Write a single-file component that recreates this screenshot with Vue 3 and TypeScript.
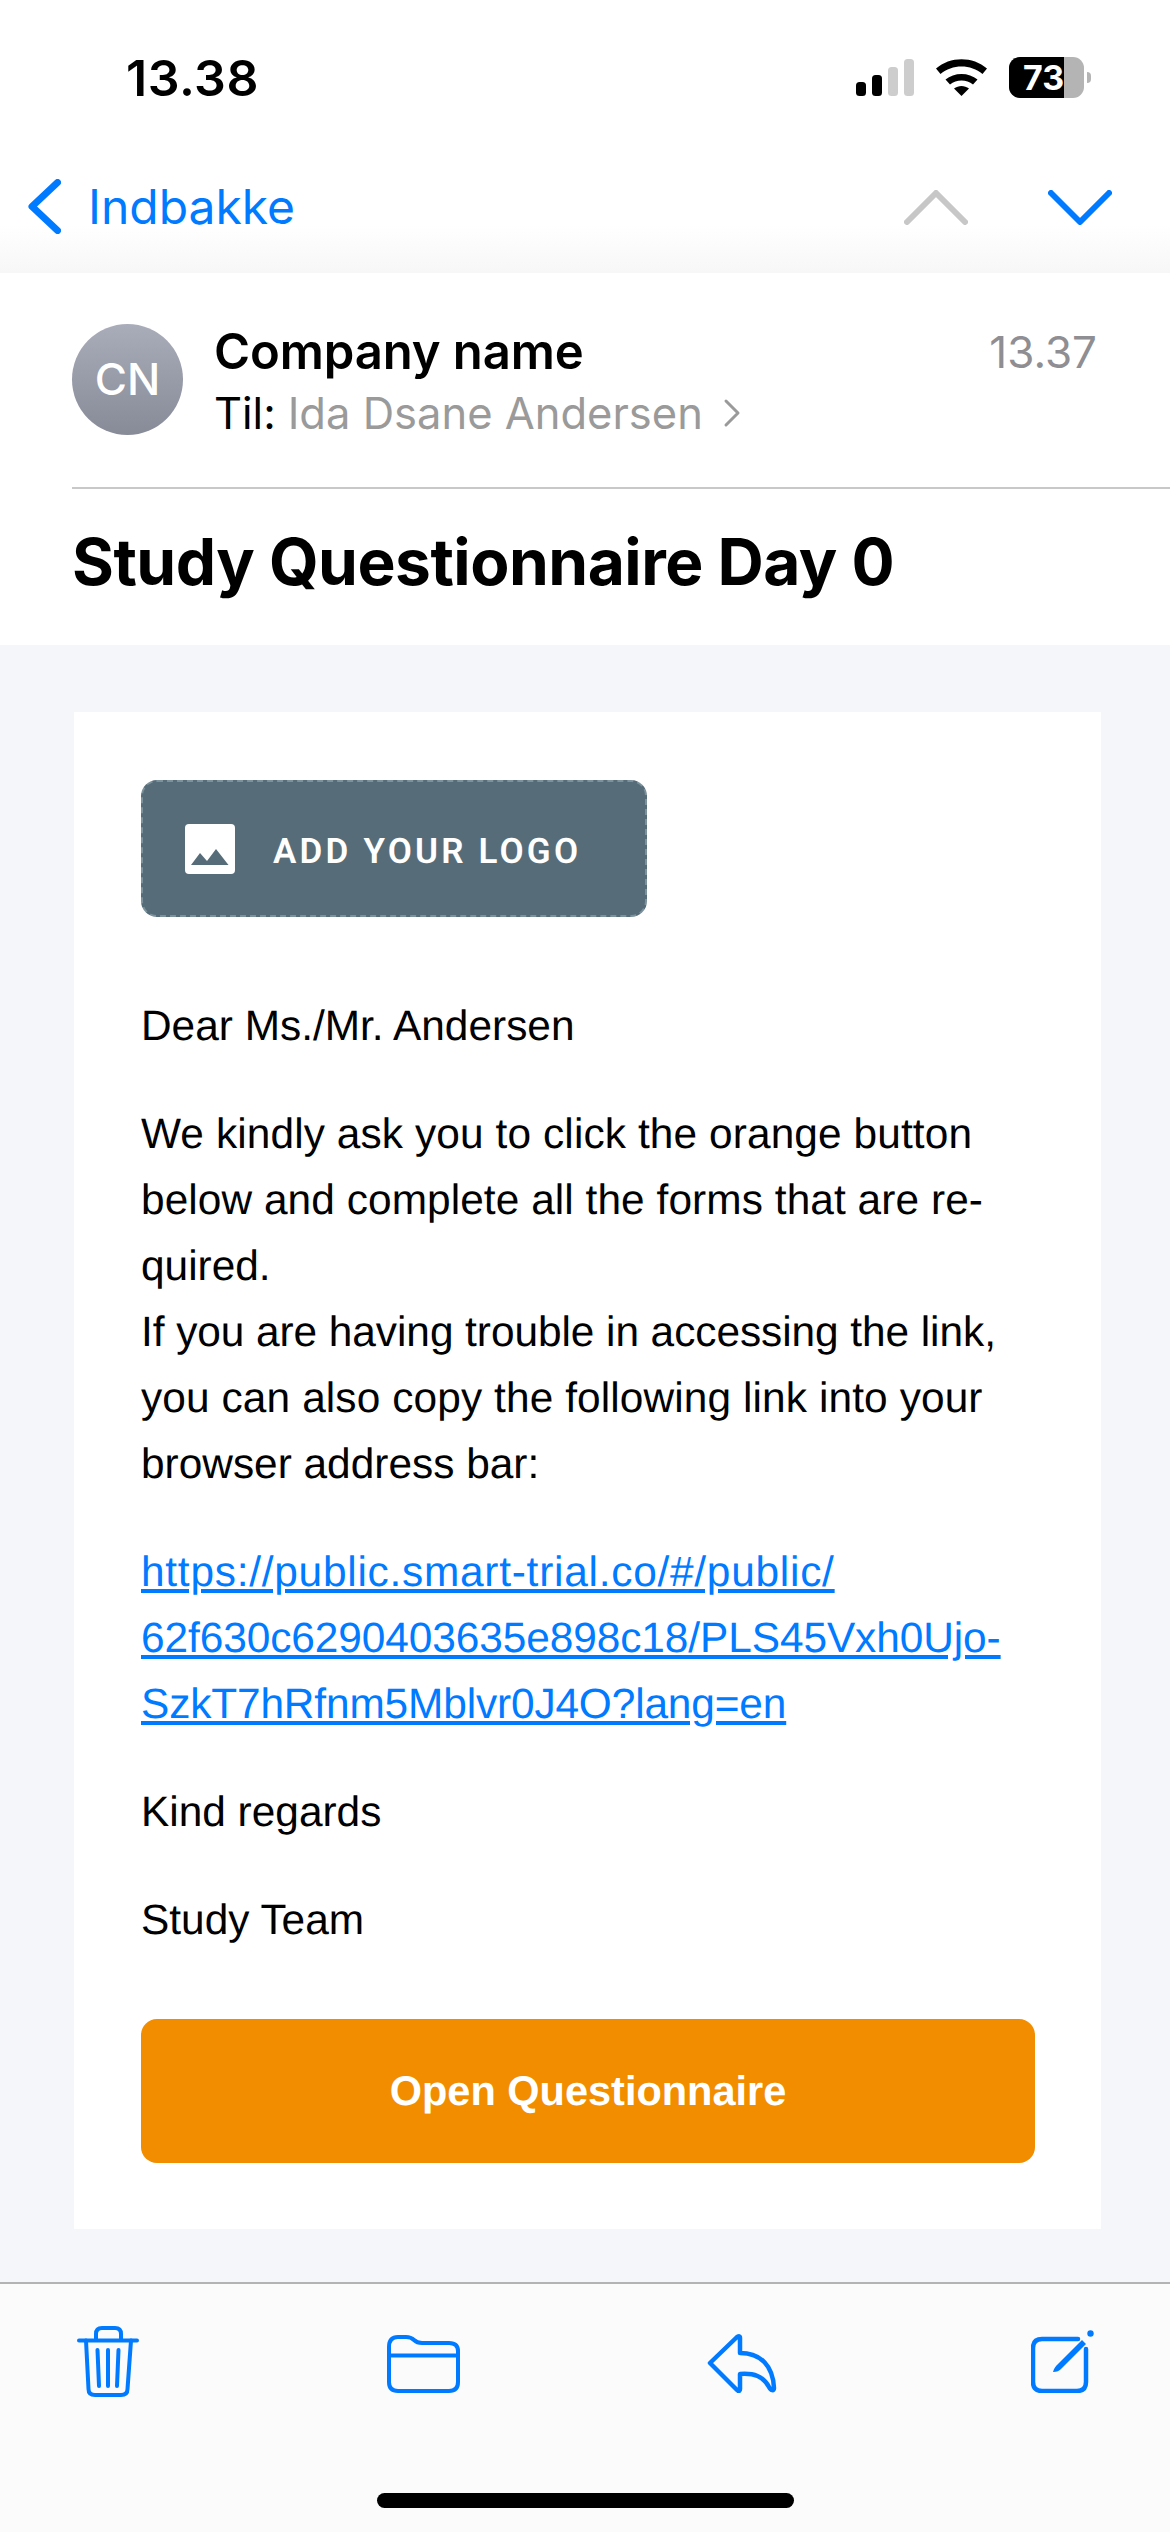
<script setup lang="ts">
interface TextLine {
  text: string
  tracking: number
}
const paragraphLines: TextLine[] = [
  { text: 'We kindly ask you to click the orange button', tracking: 0.11 },
  { text: 'below and complete all the forms that are re-', tracking: 0.07 },
  { text: 'quired.', tracking: 0 },
  { text: 'If you are having trouble in accessing the link,', tracking: -0.06 },
  { text: 'you can also copy the following link into your', tracking: 0.11 },
  { text: 'browser address bar:', tracking: 0 },
]
const linkLines: TextLine[] = [
  { text: 'https://public.smart-trial.co/#/public/', tracking: 0.75 },
  { text: '62f630c6290403635e898c18/PLS45Vxh0Ujo-', tracking: -0.08 },
  { text: 'SzkT7hRfnm5Mblvr0J4O?lang=en', tracking: -0.14 },
]
</script>

<template>
  <div class="screen">
    <header class="topbar">
      <div class="status">
        <span class="clock">13.38</span>
        <div class="status-icons">
          <svg class="signal" width="58" height="37" viewBox="0 0 58 37">
            <rect x="0" y="23" width="10" height="14" rx="3.5" fill="#000" />
            <rect x="16" y="16" width="10" height="21" rx="3.5" fill="#000" />
            <rect x="32" y="8" width="10" height="29" rx="3.5" fill="#cdcdcd" />
            <rect x="48" y="0" width="10" height="37" rx="3.5" fill="#cdcdcd" />
          </svg>
          <svg class="wifi" width="51" height="37" viewBox="0 0 51 37">
            <path d="M0 9.500C14-3 37-3 51 9.500L46.500 15C35 5 16 5 4.500 15Z" fill="#000" />
            <path d="M9.500 20.500C18 13 33 13 41.500 20.500L37 25.500C30.500 20 20.500 20 14 25.500Z" fill="#000" />
            <path d="M18 29.500C22.500 26 28.500 26 33 29.500L25.500 37Z" fill="#000" />
          </svg>
          <div class="battery">
            <div class="battery-body">
              <div class="battery-fill"></div>
              <span class="battery-num">73</span>
            </div>
            <div class="battery-nub"></div>
          </div>
        </div>
      </div>
      <nav class="nav">
        <div class="back">
          <svg width="33" height="55" viewBox="0 0 33 55">
            <path d="M29.500 3.500L4 27.500L29.500 51.500" fill="none" stroke="#007aff" stroke-width="7" stroke-linecap="round" stroke-linejoin="round" />
          </svg>
          <span class="back-label">Indbakke</span>
        </div>
        <div class="arrows">
          <svg width="64" height="35" viewBox="0 0 64 35">
            <path d="M3 32L32 3L61 32" fill="none" stroke="#c7c7c7" stroke-width="6" stroke-linecap="round" stroke-linejoin="round" />
          </svg>
          <svg width="64" height="35" viewBox="0 0 64 35">
            <path d="M3 3L32 32L61 3" fill="none" stroke="#007aff" stroke-width="6" stroke-linecap="round" stroke-linejoin="round" />
          </svg>
        </div>
      </nav>
    </header>

    <section class="mail-head">
      <div class="sender-row">
        <div class="avatar">CN</div>
        <div class="sender-text">
          <div class="sender-name">Company name</div>
          <div class="recipient">
            <span class="to">Til:</span>
            <span class="to-name">Ida Dsane Andersen</span>
            <svg width="18" height="30" viewBox="0 0 18 30">
              <path d="M3 3L15 15L3 27" fill="none" stroke="#9a9a9a" stroke-width="3" stroke-linecap="round" stroke-linejoin="round" />
            </svg>
          </div>
        </div>
        <div class="mail-time">13.37</div>
      </div>
      <div class="subject">Study Questionnaire Day 0</div>
    </section>

    <main class="mail-body">
      <article class="card">
        <div class="logo-box">
          <svg width="50" height="50" viewBox="0 0 50 50">
            <rect width="50" height="50" rx="4" fill="#fff" />
            <path d="M6 41L15 29L22 37L31 25L43.500 41Z" fill="#566d79" />
          </svg>
          <span class="logo-text">ADD YOUR LOGO</span>
        </div>
        <p class="copy">Dear Ms./Mr. Andersen</p>
        <p class="copy">
          <span
            v-for="line in paragraphLines"
            :key="line.text"
            class="line"
            :style="{ letterSpacing: line.tracking + 'px' }"
          >{{ line.text }}</span>
        </p>
        <p class="copy link">
          <span
            v-for="line in linkLines"
            :key="line.text"
            class="line"
            :style="{ letterSpacing: line.tracking + 'px' }"
          ><u>{{ line.text }}</u></span>
        </p>
        <p class="copy">Kind regards</p>
        <p class="copy">Study Team</p>
        <div class="cta">Open Questionnaire</div>
      </article>
    </main>

    <footer class="toolbar">
      <div class="tools">
        <svg class="tool-trash" width="62" height="71" viewBox="0 0 62 71" fill="none" stroke="#007aff" stroke-width="4" stroke-linecap="round" stroke-linejoin="round">
          <path d="M2 14.500H60" />
          <path d="M19 14V8C19 4 21 2 25 2H38C42 2 44 4 44 8V14" />
          <path d="M9 14.500L11.500 63C11.500 67 14 69 18 69H44C48 69 50.500 67 50.500 63L54 14.500" />
          <path d="M20.500 24L22 60M31 24V60M41.500 24L40 60" />
        </svg>
        <svg class="tool-folder" width="73" height="58" viewBox="0 0 73 58" fill="none" stroke="#007aff" stroke-width="4" stroke-linecap="round" stroke-linejoin="round">
          <path d="M2 12C2 5 5 2 11 2H19C23 2 25 3 27 5C29 7 31 8 35 8H62C68 8 71 11 71 16V47C71 53 68 56 62 56H11C5 56 2 53 2 47Z" />
          <path d="M2 20.500H71" />
        </svg>
        <svg class="tool-reply" width="70" height="59" viewBox="0 0 70 59" fill="none" stroke="#007aff" stroke-width="4.500" stroke-linecap="round" stroke-linejoin="round">
          <path d="M30 3L3 29L30 56C32 58 33 57 33 55V40C47 39 56 42 62 53C64 57 67 57 67 54C66 32 54 19 33 19V4C33 2 32 2 30 3Z" />
        </svg>
        <svg class="tool-compose" width="63" height="63" viewBox="0 0 63 63" fill="none" stroke="#007aff" stroke-width="4.500" stroke-linecap="round" stroke-linejoin="round">
          <path d="M47 9H11C5 9 2 12 2 18V52C2 58 5 61 11 61H46C52 61 55 58 55 52V19" />
          <path d="M22 42C23 38 25 36 27 34L51 10L55 14L31 38C28 41 26 42 22 42Z" fill="#007aff" stroke="none" />
          <circle cx="59.500" cy="3.500" r="3.200" fill="#007aff" stroke="none" />
        </svg>
      </div>
      <div class="home-indicator"></div>
    </footer>
  </div>
</template>

<style>
html, body { margin: 0; background: #f5f6fa; }
</style>

<style scoped>
.screen {
  width: 1170px;
  height: 2532px;
  overflow: hidden;
  display: flex;
  flex-direction: column;
  background: #f5f6fa;
  font-family: Inter, "Liberation Sans", sans-serif;
  color: #000;
}
.topbar {
  height: 273px;
  flex: none;
  box-sizing: border-box;
  background: linear-gradient(to bottom, #fff 0, #fff 225px, #f7f7f7 273px);
}
.status {
  height: 156px;
  box-sizing: border-box;
  padding: 57px 79px 0 126px;
  display: flex;
  justify-content: space-between;
  align-items: flex-start;
}
.clock {
  font-size: 50px;
  font-weight: 600;
  line-height: 42px;
  letter-spacing: 0.5px;
}
.status-icons { display: flex; align-items: center; gap: 22px; }
.battery { display: flex; align-items: center; gap: 3px; }
.battery-body {
  position: relative;
  width: 75px;
  height: 41px;
  border-radius: 11px;
  overflow: hidden;
  background: #b4b4b4;
}
.battery-fill { width: 55px; height: 41px; background: #000; }
.battery-num {
  position: absolute;
  left: 14px;
  top: 0;
  font-size: 34px;
  font-weight: 700;
  line-height: 41px;
  color: #fff;
}
.battery-nub {
  width: 4px;
  height: 11px;
  border-radius: 0 4px 4px 0;
  background: #b4b4b4;
}
.nav {
  height: 117px;
  box-sizing: border-box;
  padding: 23px 58px 0 28px;
  display: flex;
  justify-content: space-between;
  align-items: flex-start;
}
.back { display: flex; align-items: center; gap: 27px; }
.back-label {
  font-size: 48px;
  color: #007aff;
  line-height: 55px;
}
.arrows { display: flex; gap: 80px; padding-top: 11px; }
.mail-head {
  flex: none;
  height: 372px;
  background: #fff;
  box-sizing: border-box;
  padding-left: 72px;
}
.sender-row {
  height: 216px;
  box-sizing: border-box;
  padding: 51px 73px 0 0;
  border-bottom: 2px solid #c8c8c8;
  display: flex;
  align-items: flex-start;
}
.avatar {
  width: 111px;
  height: 111px;
  border-radius: 50%;
  background: linear-gradient(to bottom, #a9acb9, #878a97);
  color: #fff;
  font-size: 44px;
  font-weight: 500;
  line-height: 111px;
  text-align: center;
  flex: none;
}
.sender-text { margin-left: 31px; flex: 1; }
.sender-name { font-size: 49px; font-weight: 600; line-height: 56px; letter-spacing: -0.1px; }
.recipient {
  display: flex;
  align-items: center;
  gap: 14px;
  font-size: 43.5px;
  line-height: 56px;
  margin-top: 5px;
}
.recipient svg { margin-left: 6px; }
.to-name { color: #9a9a9a; margin-left: -2px; }
.mail-time { font-size: 44px; color: #8e8e93; line-height: 56px; }
.subject {
  font-size: 64px;
  font-weight: 700;
  line-height: 146px;
  letter-spacing: -0.5px;
}
.mail-body { flex: 1; padding: 67px 69px 0 74px; min-height: 0; }
.card {
  box-sizing: border-box;
  height: 1517px;
  background: #fff;
  padding: 68px 66px 66px 67px;
  font-family: "Liberation Sans", Arial, sans-serif;
  text-rendering: geometricPrecision;
}
.logo-box {
  box-sizing: border-box;
  width: 506px;
  height: 137px;
  border: 2px dashed #7b919c;
  border-radius: 16px;
  background: #566d79;
  display: flex;
  align-items: center;
  padding-left: 42px;
  gap: 38px;
  margin-bottom: 76px;
}
.logo-text {
  font-family: Roboto, sans-serif;
  font-size: 35px;
  font-weight: 600;
  color: #fff;
  letter-spacing: 3.2px;
  margin-top: 5px;
}
.copy {
  margin: 0 0 42px;
  font-size: 42.4px;
  line-height: 66px;
}
.line { display: block; white-space: nowrap; }
.link { color: #007aff; }
.cta {
  margin-top: 66px;
  height: 144px;
  border-radius: 16px;
  background: #f28d00;
  color: #fff;
  font-size: 41.5px;
  font-weight: 700;
  line-height: 144px;
  text-align: center;
}
.toolbar {
  flex: none;
  height: 250px;
  box-sizing: border-box;
  border-top: 2px solid #b3b3b3;
  background: #fbfbfc;
  position: relative;
}
.tools {
  display: flex;
  align-items: flex-end;
  padding-left: 77px;
  height: 109px;
  box-sizing: border-box;
}
.tool-trash { margin-bottom: -4px; }
.tool-folder { margin-left: 248px; }
.tool-reply { margin-left: 247px; }
.tool-compose { margin-left: 254px; }
.home-indicator {
  position: absolute;
  left: 377px;
  top: 209px;
  width: 417px;
  height: 15px;
  border-radius: 8px;
  background: #000;
}
</style>
